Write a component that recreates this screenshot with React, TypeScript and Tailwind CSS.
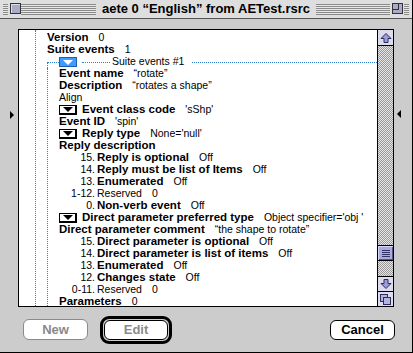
import React from 'react'

const bold = "font-['Liberation_Sans',Arial,sans-serif] font-bold text-[11.5px] text-black"
const reg = "font-['Liberation_Sans',Arial,sans-serif] text-[10.5px] text-black"

function Disclosure() {
  return (
    <span className="flex h-[10px] w-[18px] shrink-0 items-center justify-center border border-r-2 border-b-2 border-black bg-white">
      <span className="h-0 w-0 border-x-[5px] border-t-[5px] border-x-transparent border-t-black" />
    </span>
  )
}

function Row({ label, value, disc, className = '' }: { label: string; value?: string; disc?: boolean; className?: string }) {
  return (
    <div className={`flex h-[12px] items-center whitespace-nowrap ${className}`}>
      {disc && <Disclosure />}
      <span className={`${bold} ${disc ? 'ml-[5px]' : ''}`}>{label}</span>
      {value !== undefined && <span className={`${reg} ml-[10px]`}>{value}</span>}
    </div>
  )
}

function Flag({ num, label, value, plain }: { num: string; label: string; value: string; plain?: boolean }) {
  return (
    <div className="flex h-[12px] items-center whitespace-nowrap">
      <span className={`${reg} w-[36px] text-right`}>{num}</span>
      <span className={`${plain ? reg : bold} ml-[2px]`}>{label}</span>
      <span className={`${reg} ml-[10px]`}>{value}</span>
    </div>
  )
}

function ArrowIcon({ down }: { down?: boolean }) {
  return (
    <svg width="12" height="12" viewBox="0 0 12 12" className={down ? 'rotate-180' : ''}>
      <path d="M6 1.5 L11 6.5 L8 6.5 L8 10.5 L4 10.5 L4 6.5 L1 6.5 Z" fill="#9c9cd6" stroke="#2b2b5e" strokeWidth="1" />
    </svg>
  )
}

function Scrollbar() {
  const track = 'bg-[repeating-conic-gradient(#999_0_25%,#e6e6e6_0_50%)] bg-[length:2px_2px]'
  return (
    <div className="flex w-[16px] flex-col border-l border-black bg-[#ddd]">
      <div className="flex h-[16px] items-center justify-center border-b border-black bg-[#dcdcec]">
        <ArrowIcon />
      </div>
      <div className={`h-[199px] ${track}`} />
      <div className="flex h-[16px] flex-col items-center justify-center gap-[1px] border border-x-0 border-black bg-[#aaaadd] shadow-[inset_1px_1px_0_#d8d8ff,inset_-1px_-1px_0_#555588]">
        <span className="h-px w-[8px] bg-[#333366]" />
        <span className="h-px w-[8px] bg-[#333366]" />
        <span className="h-px w-[8px] bg-[#333366]" />
        <span className="h-px w-[8px] bg-[#333366]" />
      </div>
      <div className={`flex-1 ${track}`} />
      <div className="flex h-[16px] items-center justify-center border-t border-b border-black bg-[#dcdcec]">
        <ArrowIcon down />
      </div>
      <div className="flex h-[14px] items-center justify-center bg-[#dcdcec]">
        <svg width="11" height="11" viewBox="0 0 11 11">
          <rect x="0.5" y="0.5" width="7" height="7" fill="#b4b4e0" stroke="#2b2b5e" />
          <rect x="3.5" y="3.5" width="7" height="7" fill="#b4b4e0" stroke="#2b2b5e" />
        </svg>
      </div>
    </div>
  )
}

function Stripes({ children, className = '' }: { children?: React.ReactNode; className?: string }) {
  return (
    <div className={`flex h-[11px] flex-1 items-center bg-[repeating-linear-gradient(to_bottom,#8a8a8a_0_1px,#e8e8e8_1px_2px)] ${className}`}>
      {children}
    </div>
  )
}

export default function App() {
  const dotV = 'border-l border-dotted border-[#2f7fd4]'
  const dotH = 'border-t border-dotted border-[#2f7fd4]'
  return (
    <div className="flex h-[353px] w-[413px] flex-col border-r border-b border-black bg-[#cccccc]">
      {/* title bar */}
      <div className="flex h-[19px] items-center border-b border-[#555] bg-[#dedede] px-[3px]">
        <Stripes>
          <span className="ml-[5px] h-[13px] w-[13px] border-x-2 border-[#dedede] bg-[#dedede]">
            <span className="block h-[11px] w-[11px] border border-[#333] bg-[#aaaacc] shadow-[inset_1px_1px_0_#ddd]" />
          </span>
        </Stripes>
        <span className="px-[6px] font-['Liberation_Sans',Arial,sans-serif] text-[13px] font-bold whitespace-nowrap text-black">
          aete 0 “English” from AETest.rsrc
        </span>
        <Stripes className="justify-end">
          <span className="mr-[5px] h-[13px] w-[14px] border-x-2 border-[#dedede] bg-[#dedede]">
            <span className="relative block h-[11px] w-[11px] border border-[#333] bg-[#aaaacc]">
              <span className="absolute top-0 left-0 h-[6px] w-[6px] border-r border-b border-[#333]" />
            </span>
          </span>
        </Stripes>
      </div>

      {/* body */}
      <div className="flex pt-[10px]">
        <div className="flex w-[18px] justify-center pt-[82px]">
          <span className="ml-[6px] h-0 w-0 border-y-[4px] border-l-[4px] border-y-transparent border-l-black" />
        </div>
        <div className="flex h-[278px] w-[376px] border border-black">
          <div className="flex-1 overflow-hidden bg-white">
            <div className={`ml-[16px] h-full ${dotV} pt-[2px] pl-[11px]`}>
              <Row label="Version" value="0" />
              <Row label="Suite events" value="1" />
              <div className="flex h-[12px] items-center whitespace-nowrap">
                <span className={`h-[6px] w-[12px] self-end ${dotV} ${dotH}`} />
                <span className="flex h-[10px] w-[18px] shrink-0 items-center justify-center border border-[#1d5fb0] bg-[#3f9bff]">
                  <span className="h-0 w-0 border-x-[5px] border-t-[5px] border-x-transparent border-t-white" />
                </span>
                <span className={`ml-[5px] w-[28px] ${dotH}`} />
                <span className={`${reg} ml-[2px]`}>Suite events #1</span>
                <span className={`ml-[8px] flex-1 ${dotH}`} />
              </div>
              <div className={`${dotV} pl-[11px]`}>
                <Row label="Event name" value="“rotate”" />
                <Row label="Description" value="“rotates a shape”" />
                <div className={`flex h-[12px] items-center ${reg}`}>Align</div>
                <Row disc label="Event class code" value="'sShp'" />
                <Row label="Event ID" value="'spin'" />
                <Row disc label="Reply type" value="None='null'" />
                <Row label="Reply description" />
                <Flag num="15." label="Reply is optional" value="Off" />
                <Flag num="14." label="Reply must be list of Items" value="Off" />
                <Flag num="13." label="Enumerated" value="Off" />
                <Flag num="1-12." label="Reserved" value="0" plain />
                <Flag num="0." label="Non-verb event" value="Off" />
                <Row disc label="Direct parameter preferred type" value="Object specifier='obj '" />
                <Row label="Direct parameter comment" value="“the shape to rotate”" />
                <Flag num="15." label="Direct parameter is optional" value="Off" />
                <Flag num="14." label="Direct parameter is list of items" value="Off" />
                <Flag num="13." label="Enumerated" value="Off" />
                <Flag num="12." label="Changes state" value="Off" />
                <Flag num="0-11." label="Reserved" value="0" plain />
                <Row label="Parameters" value="0" />
              </div>
            </div>
          </div>
          <Scrollbar />
        </div>
        <div className="flex w-[18px] pt-[81px]">
          <span className="ml-[3px] h-0 w-0 border-y-[4px] border-r-[4px] border-y-transparent border-r-black" />
        </div>
      </div>

      {/* buttons */}
      <div className="flex flex-1 items-center pr-[17px] pl-[23px] font-['Liberation_Sans',Arial,sans-serif] text-[13px] font-bold">
        <button className="flex h-[21px] w-[65px] items-center justify-center rounded-[6px] border border-[#8a8a8a] bg-white text-[#8a8a8a]">
          New
        </button>
        <div className="ml-[12px] rounded-[9px] border-[3px] border-black p-[1px]">
          <button className="flex h-[20px] w-[64px] items-center justify-center rounded-[6px] border border-black bg-white text-[#8a8a8a]">
            Edit
          </button>
        </div>
        <button className="ml-auto flex h-[20px] w-[65px] items-center justify-center rounded-[6px] border border-black bg-white text-black">
          Cancel
        </button>
      </div>
    </div>
  )
}
